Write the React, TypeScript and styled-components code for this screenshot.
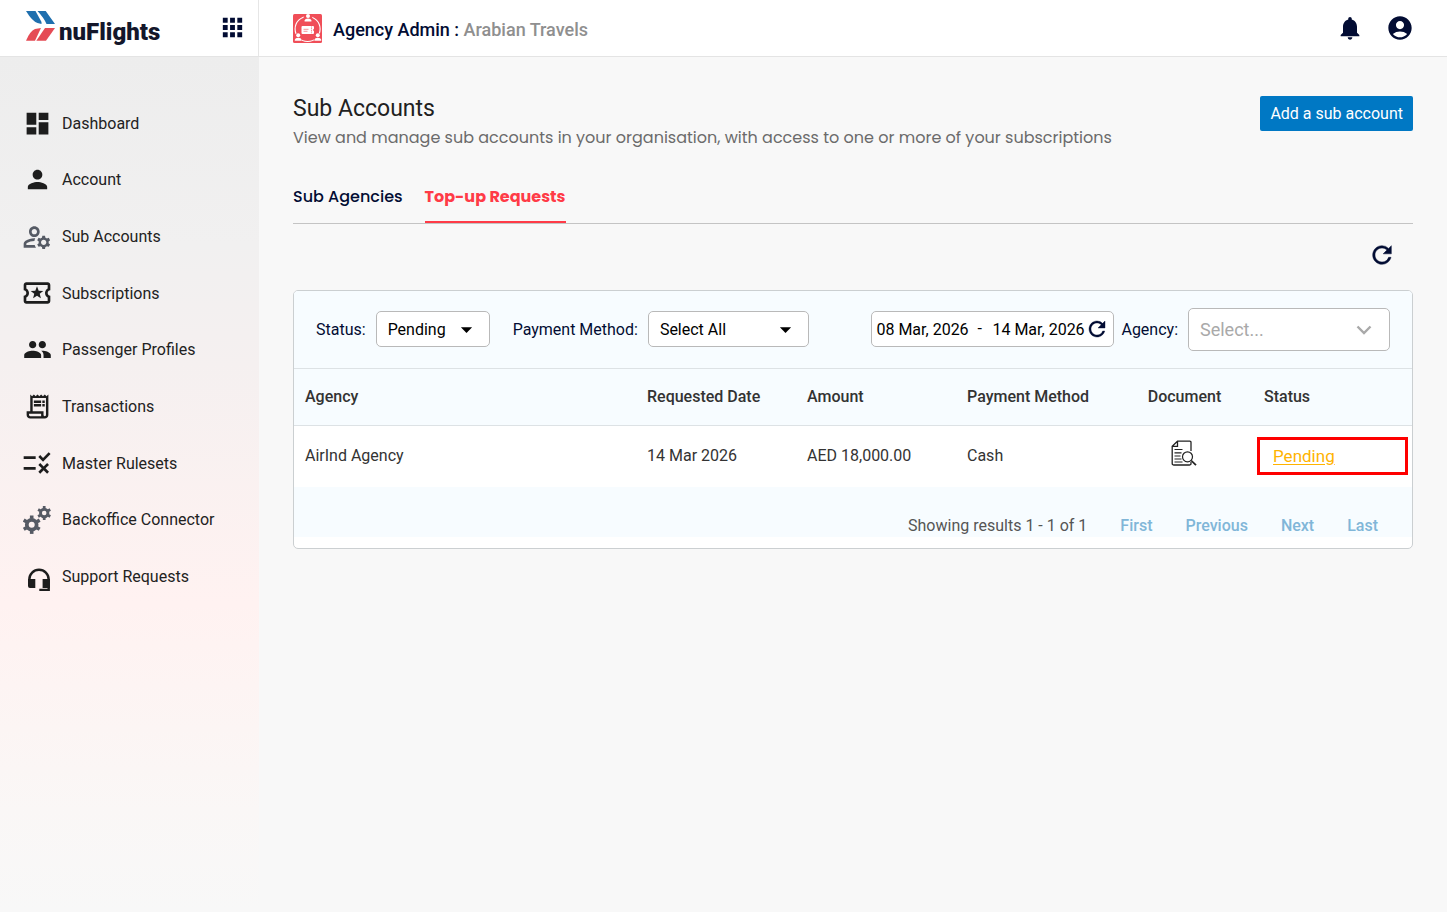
import React from 'react';
import styled, { createGlobalStyle } from 'styled-components';
import {
  MdAccountCircle,
  MdApps,
  MdArrowDropDown,
  MdDashboard,
  MdNotifications,
  MdOutlineLocalActivity,
  MdOutlineManageAccounts,
  MdOutlineReceiptLong,
  MdPeople,
  MdPerson,
  MdRefresh,
  MdRule,
} from 'react-icons/md';

const navy = '#020c33';
const red = '#ff3b47';
const displayFont = "Poppins, Inter, 'Open Sans', sans-serif";

const GlobalStyle = createGlobalStyle`
  *, *::before, *::after { box-sizing: border-box; }
  body {
    margin: 0;
    background: #f8f8f8;
    color: #333;
    font-family: Roboto, 'Liberation Sans', sans-serif;
    font-size: 16px;
    line-height: 20px;
  }
  button, input, select { font: inherit; color: inherit; margin: 0; }
  svg { display: block; flex: none; }
`;

const Page = styled.div`
  display: flex;
  flex-direction: column;
  min-height: 100vh;
`;

const TopBar = styled.header`
  display: flex;
  height: 57px;
  background: #fff;
  border-bottom: 1px solid #e4e4e4;
`;

const Brand = styled.div`
  display: flex;
  align-items: center;
  justify-content: space-between;
  width: 259px;
  padding: 0 11px 2px 25px;
  border-right: 1px solid #e6e6e6;
`;

const LogoLink = styled.a`
  display: flex;
  align-items: flex-start;
  gap: 3px;
  color: #14172b;
  text-decoration: none;
`;

const LogoText = styled.span`
  padding-top: 10px;
  font-size: 24px;
  font-weight: 900;
  line-height: 24px;
`;

const IconButton = styled.button`
  display: flex;
  padding: 0;
  border: 0;
  background: none;
  color: ${navy};
  cursor: pointer;
`;

const TopMain = styled.div`
  display: flex;
  flex: 1;
  align-items: center;
  padding: 0 33px 0 34px;
`;

const OrgName = styled.p`
  margin: 3px 0 0 11px;
  color: ${navy};
  font-size: 18px;
  font-weight: 500;
`;

const OrgMuted = styled.span`
  color: #8f8f8f;
`;

const TopActions = styled.div`
  display: flex;
  gap: 22px;
  margin-left: auto;
`;

const Body = styled.div`
  display: flex;
  flex: 1;
`;

const Sidebar = styled.nav`
  width: 259px;
  padding: 38px 23px;
  background: linear-gradient(180deg, #ededed 0%, #f1f0f0 22%, #f5f0f0 36%, #fff2f1 64%, #faf7f6 88%, #f8f8f8 100%);
`;

const NavList = styled.ul`
  display: grid;
  grid-auto-rows: 1fr;
  height: 510px;
  margin: 0;
  padding: 0;
  list-style: none;
`;

const NavLink = styled.a`
  display: flex;
  align-items: center;
  gap: 11px;
  height: 100%;
  color: #222;
  text-decoration: none;
`;

const NavLabel = styled.span`
  padding-top: 1px;
`;

const NavIcon = styled.span<{ $muted?: boolean }>`
  display: flex;
  align-items: center;
  justify-content: center;
  width: 28px;
  height: 32px;
  color: ${(p) => (p.$muted ? '#555a64' : '#1d1d1d')};
`;

const Main = styled.main`
  flex: 1;
  min-width: 0;
  padding: 38px 34px;
`;

const Heading = styled.div`
  display: flex;
  align-items: flex-start;
  justify-content: space-between;
`;

const Title = styled.h1`
  margin: 0;
  color: #212121;
  font-size: 23px;
  font-weight: 400;
  line-height: 28px;
`;

const Subtitle = styled.p`
  margin: 3px 0 0;
  color: #6b6b6b;
  font-family: ${displayFont};
  line-height: 24px;
`;

const PrimaryButton = styled.button`
  height: 35px;
  margin-top: 1px;
  padding: 0 10px;
  border: 0;
  border-radius: 2px;
  background: #0078c4;
  color: #fff;
  cursor: pointer;
`;

const Tabs = styled.div`
  display: flex;
  gap: 22px;
  margin-top: 34px;
  border-bottom: 1px solid #c4c4c4;
`;

const Tab = styled.button<{ $active?: boolean }>`
  height: 39px;
  padding: 0 0 12px;
  border: 0;
  border-bottom: 2px solid ${(p) => (p.$active ? red : 'transparent')};
  background: none;
  color: ${(p) => (p.$active ? red : navy)};
  font-family: ${displayFont};
  font-weight: ${(p) => (p.$active ? 700 : 500)};
  cursor: pointer;
`;

const Tools = styled.div`
  display: flex;
  justify-content: flex-end;
  padding: 17px 17px 21px;
`;

const BoldRefresh = styled(MdRefresh)`
  path:last-child {
    stroke: currentColor;
    stroke-width: 0.4;
  }
`;

const Card = styled.section`
  padding-bottom: 11px;
  border: 1px solid #cbcfd1;
  border-radius: 5px;
  background: #fff;
  overflow: hidden;
`;

const Filters = styled.form`
  display: flex;
  align-items: center;
  height: 78px;
  padding: 0 22px;
  border-bottom: 1px solid #dde2e5;
  background: #f7fcff;
  color: ${navy};
`;

const FilterLabel = styled.label`
  margin-right: 10px;
`;

const SelectBox = styled.span<{ $width: number; $large?: boolean }>`
  display: grid;
  align-items: center;
  width: ${(p) => p.$width}px;
  height: ${(p) => (p.$large ? 43 : 36)}px;
  margin: ${(p) => (p.$large ? '0' : '0 23px 1px 0')};
  border: 1px solid #b9b9b9;
  border-radius: 5px;
  background: #fff;
  color: ${(p) => (p.$large ? '#a9a9a9' : '#000')};
  font-size: ${(p) => (p.$large ? 18 : 16)}px;

  > * { grid-area: 1 / 1; }
  > svg {
    justify-self: end;
    margin-right: ${(p) => (p.$large ? 17 : 9)}px;
    pointer-events: none;
  }
`;

const Select = styled.select`
  width: 100%;
  height: 100%;
  padding: 1px 11px 0;
  border: 0;
  background: none;
  appearance: none;
`;

const DateRange = styled.div`
  display: flex;
  align-items: center;
  width: 243px;
  height: 36px;
  margin: 0 7px 1px auto;
  padding: 0 4px;
  border: 1px solid #b9b9b9;
  border-radius: 5px;
  background: #fff;
  color: #000;
`;

const DateInput = styled.input`
  width: 93px;
  padding: 2px 0 0;
  border: 0;
  background: none;
`;

const Dash = styled.span`
  width: 24px;
  padding-left: 8px;
`;

const Table = styled.table`
  width: 100%;
  border-collapse: collapse;
  table-layout: fixed;
`;

const HeadCell = styled.th<{ $width?: number; $center?: boolean }>`
  width: ${(p) => (p.$width ? `${p.$width}px` : 'auto')};
  height: 56px;
  padding: 0 11px;
  border-bottom: 1px solid #dde2e5;
  background: #f7fcff;
  font-weight: 500;
  text-align: ${(p) => (p.$center ? 'center' : 'left')};
`;

const Cell = styled.td<{ $flush?: boolean }>`
  height: 62px;
  padding: 0 ${(p) => (p.$flush ? 4 : 11)}px;
`;

const DocumentButton = styled(IconButton)`
  margin: 0 auto 5px;
  color: #222;
`;

const StatusFrame = styled.div`
  display: flex;
  align-items: center;
  height: 38px;
  padding-left: 13px;
  border: 3px solid #fe0000;
`;

const StatusLink = styled.a`
  color: #ffb300;
  font-size: 17px;
  text-underline-offset: 2px;
`;

const Pager = styled.div`
  display: flex;
  justify-content: flex-end;
  gap: 33px;
  height: 50px;
  padding: 29px 34px 0;
  background: #f7fcff;
  color: #555;
`;

const PageButton = styled.button`
  height: 20px;
  padding: 0;
  border: 0;
  background: none;
  color: #80b6d8;
  font-weight: 500;
`;

const LogoMark = () => (
  <svg width="31" height="32" viewBox="0 0 31 32" aria-hidden="true">
    <path fill="#1f6fae" d="M1 1h9.5L16.5 12v2l-4-1Q7 11 1 1Z" />
    <path fill="#1f6fae" d="M12.5 1h8.2L30 14h-8.5Q19 8 12.5 1Z" />
    <path fill="#e54b55" d="M1 30.7Q5 21 10 19l6-1-6 12.7Z" />
    <path fill="#e54b55" d="M11.3 30.7 20 18h10l-9 12.7Z" />
  </svg>
);

const Person = ({ x, y }: { x: number; y: number }) => (
  <g transform={`translate(${x} ${y})`}>
    <circle r="4.5" cy="1" fill="#f04e58" />
    <circle r="2" cy="-1.4" fill="#fff" />
    <path d="M-3.4 4V3Q-3 1 0 1t3.4 2v1Z" fill="#fff" />
  </g>
);

const AgencyIcon = () => (
  <svg width="29" height="29" viewBox="0 0 29 29" aria-hidden="true">
    <rect width="29" height="29" rx="1.5" fill="#f04e58" />
    <circle cx="14.6" cy="15" r="12.5" fill="none" stroke="#fff" strokeWidth="1.1" />
    <Person x={15} y={3.5} />
    <Person x={5.2} y={22.7} />
    <Person x={24.8} y={22.7} />
    <path d="M9.5 12H20q1 0 1 1v1.8a1.3 1.3 0 0 0 0 2.4V19q0 1-1 1H9.5q-1 0-1-1v-6q0-1 1-1Z" fill="#fff" />
    <path d="M10.5 15.3h5M10.5 17.3h4" stroke="#f04e58" strokeWidth=".6" />
    <path d="M18.5 12.5v7" stroke="#f04e58" strokeWidth=".7" strokeDasharray="1 .7" />
  </svg>
);

const Gear = ({ cx, cy, scale }: { cx: number; cy: number; scale: number }) => (
  <g transform={`translate(${cx} ${cy}) scale(${scale})`} stroke="currentColor">
    <circle r="4.9" fill="none" strokeWidth="3.8" />
    {[0, 60, 120, 180, 240, 300].map((angle) => (
      <path key={angle} d="M0-6v-3.2" strokeWidth="3.6" transform={`rotate(${angle})`} />
    ))}
  </g>
);

const GearsIcon = () => (
  <svg width="29" height="30" viewBox="0 0 29 30" aria-hidden="true">
    <Gear cx={8.7} cy={19.7} scale={1} />
    <Gear cx={21.2} cy={8} scale={0.76} />
  </svg>
);

const HeadsetIcon = () => (
  <svg width="28" height="28" viewBox="0 0 28 28" aria-hidden="true">
    <path
      d="M6.3 20v-3.5a9.7 9.7 0 0 1 19.4 0V27H16.3"
      fill="none"
      stroke="currentColor"
      strokeWidth="2.4"
    />
    <path d="M5 16h7.3v9H7a2 2 0 0 1-2-2ZM19.6 16h7.3v9h-7.3Z" fill="currentColor" />
  </svg>
);

const DocumentIcon = () => (
  <svg width="29" height="27" viewBox="0 0 29 27" fill="none" stroke="currentColor" aria-hidden="true">
    <path d="M21 11V2.5Q21 1.2 19.7 1.2H7.5L2.2 6.3V23.5Q2.2 25 3.7 25H19.5Q21 25 21 23.5V22M7.5 1.5v4.8h-5" strokeWidth="1.3" />
    <path d="M4.5 9.5h8M4.5 12.8h7M4.5 16h6M4.5 19h7M4.5 22h8" strokeWidth="1.2" />
    <circle cx="17.5" cy="16.8" r="5" strokeWidth="1.2" />
    <path d="m21.2 20.5 4.8 4.7" strokeWidth="1.7" />
  </svg>
);

const Chevron = () => (
  <svg width="16" height="10" viewBox="0 0 16 10" aria-hidden="true">
    <path d="m1.5 1.5 6.5 6.5 6.5-6.5" fill="none" stroke="#a9a9a9" strokeWidth="2.4" />
  </svg>
);

const navItems = [
  { label: 'Dashboard', icon: <MdDashboard size={29} /> },
  { label: 'Account', icon: <MdPerson size={29} /> },
  { label: 'Sub Accounts', icon: <MdOutlineManageAccounts size={32} />, muted: true },
  { label: 'Subscriptions', icon: <MdOutlineLocalActivity size={32} /> },
  { label: 'Passenger Profiles', icon: <MdPeople size={29} /> },
  { label: 'Transactions', icon: <MdOutlineReceiptLong size={29} /> },
  { label: 'Master Rulesets', icon: <MdRule size={32} /> },
  { label: 'Backoffice Connector', icon: <GearsIcon />, muted: true },
  { label: 'Support Requests', icon: <HeadsetIcon /> },
];

export default function App() {
  return (
    <Page>
      <GlobalStyle />
      <TopBar>
        <Brand>
          <LogoLink href="#">
            <LogoMark />
            <LogoText>nuFlights</LogoText>
          </LogoLink>
          <IconButton aria-label="Apps">
            <MdApps size={29} />
          </IconButton>
        </Brand>
        <TopMain>
          <AgencyIcon />
          <OrgName>
            Agency Admin : <OrgMuted>Arabian Travels</OrgMuted>
          </OrgName>
          <TopActions>
            <IconButton aria-label="Notifications">
              <MdNotifications size={28} />
            </IconButton>
            <IconButton aria-label="Profile">
              <MdAccountCircle size={28} />
            </IconButton>
          </TopActions>
        </TopMain>
      </TopBar>
      <Body>
        <Sidebar>
          <NavList>
            {navItems.map((item) => (
              <li key={item.label}>
                <NavLink href="#">
                  <NavIcon $muted={item.muted}>{item.icon}</NavIcon>
                  <NavLabel>{item.label}</NavLabel>
                </NavLink>
              </li>
            ))}
          </NavList>
        </Sidebar>
        <Main>
          <Heading>
            <div>
              <Title>Sub Accounts</Title>
              <Subtitle>
                View and manage sub accounts in your organisation, with access to one or more of your subscriptions
              </Subtitle>
            </div>
            <PrimaryButton>Add a sub account</PrimaryButton>
          </Heading>
          <Tabs role="tablist">
            <Tab role="tab" aria-selected={false}>Sub Agencies</Tab>
            <Tab role="tab" aria-selected $active>Top-up Requests</Tab>
          </Tabs>
          <Tools>
            <IconButton aria-label="Refresh">
              <BoldRefresh size={28} />
            </IconButton>
          </Tools>
          <Card>
            <Filters>
              <FilterLabel htmlFor="status">Status:</FilterLabel>
              <SelectBox $width={114}>
                <Select id="status">
                  <option>Pending</option>
                </Select>
                <MdArrowDropDown size={27} />
              </SelectBox>
              <FilterLabel htmlFor="method">Payment Method:</FilterLabel>
              <SelectBox $width={161}>
                <Select id="method">
                  <option>Select All</option>
                </Select>
                <MdArrowDropDown size={27} />
              </SelectBox>
              <DateRange>
                <DateInput aria-label="From date" defaultValue="08 Mar, 2026" />
                <Dash>-</Dash>
                <DateInput aria-label="To date" defaultValue="14 Mar, 2026" />
                <IconButton type="button" aria-label="Reset dates">
                  <BoldRefresh size={24} />
                </IconButton>
              </DateRange>
              <FilterLabel htmlFor="agency">Agency:</FilterLabel>
              <SelectBox $width={202} $large>
                <Select id="agency">
                  <option>Select...</option>
                </Select>
                <Chevron />
              </SelectBox>
            </Filters>
            <Table>
              <thead>
                <tr>
                  <HeadCell>Agency</HeadCell>
                  <HeadCell $width={160}>Requested Date</HeadCell>
                  <HeadCell $width={160}>Amount</HeadCell>
                  <HeadCell $width={160}>Payment Method</HeadCell>
                  <HeadCell $width={137} $center>Document</HeadCell>
                  <HeadCell $width={159}>Status</HeadCell>
                </tr>
              </thead>
              <tbody>
                <tr>
                  <Cell>AirInd Agency</Cell>
                  <Cell>14 Mar 2026</Cell>
                  <Cell>AED 18,000.00</Cell>
                  <Cell>Cash</Cell>
                  <Cell>
                    <DocumentButton aria-label="View document">
                      <DocumentIcon />
                    </DocumentButton>
                  </Cell>
                  <Cell $flush>
                    <StatusFrame>
                      <StatusLink href="#">Pending</StatusLink>
                    </StatusFrame>
                  </Cell>
                </tr>
              </tbody>
            </Table>
            <Pager>
              <span>Showing results 1 - 1 of 1</span>
              <PageButton>First</PageButton>
              <PageButton>Previous</PageButton>
              <PageButton>Next</PageButton>
              <PageButton>Last</PageButton>
            </Pager>
          </Card>
        </Main>
      </Body>
    </Page>
  );
}
